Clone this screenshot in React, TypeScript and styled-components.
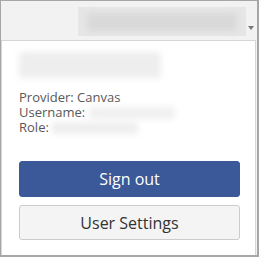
import React from 'react';
import styled, { createGlobalStyle } from 'styled-components';

const GlobalStyle = createGlobalStyle`
  html, body {
    margin: 0;
    padding: 0;
    background: #ffffff;
  }
  body {
    font-family: "Open Sans", "Noto Sans", sans-serif;
  }
`;

const Frame = styled.div`
  box-sizing: border-box;
  width: 259px;
  height: 257px;
  border: 1px solid #a6a6a6;
  border-right-width: 2px;
  border-bottom-width: 2px;
  background: #f2f2f2;
  display: flex;
  flex-direction: column;
`;

const TopBar = styled.div`
  height: 39px;
  display: flex;
  align-items: center;
  justify-content: flex-end;
  padding-right: 3px;
  gap: 2px;
`;

// blurred placeholder for the redacted account details
const Redacted = styled.div<{ w: number; h: number; tone?: string }>`
  width: ${({ w }) => w}px;
  height: ${({ h }) => h}px;
  background: ${({ tone }) => tone || '#ececec'};
  filter: blur(3px);
  border-radius: 2px;
  flex-shrink: 0;
`;

const AccountChip = styled.div`
  width: 168px;
  height: 29px;
  background: #e6e6e6;
  display: flex;
  align-items: center;
  justify-content: center;
  margin-top: 2px;
`;

const Caret = styled.span`
  width: 0;
  height: 0;
  border-left: 3.5px solid transparent;
  border-right: 3.5px solid transparent;
  border-top: 4px solid #777777;
  margin-top: 14px;
`;

const Panel = styled.div`
  flex: 1;
  margin-right: 1px;
  background: #ffffff;
  border: 1px solid #d6d6d6;
  border-bottom: none;
  padding: 11px 16px 0 17px;
  display: flex;
  flex-direction: column;
`;

const Details = styled.div`
  margin-top: 12px;
  font-size: 13px;
  line-height: 15px;
  color: #585858;
`;

const DetailRow = styled.div`
  display: flex;
  align-items: center;
  height: 15px;
  white-space: nowrap;
`;

const Button = styled.button<{ primary?: boolean }>`
  box-sizing: border-box;
  width: 221px;
  height: ${({ primary }) => (primary ? 36 : 35)}px;
  border-radius: 3px;
  font-family: "Open Sans", "Noto Sans", sans-serif;
  font-size: 16px;
  cursor: pointer;
  border: 1px solid ${({ primary }) => (primary ? '#3b5898' : '#cccccc')};
  background: ${({ primary }) => (primary ? '#3b5898' : '#f4f4f4')};
  color: ${({ primary }) => (primary ? '#ffffff' : '#333333')};
  padding: 0;
`;

const Actions = styled.div`
  margin-top: 26px;
  display: flex;
  flex-direction: column;
  gap: 8px;
`;

export default function App() {
  return (
    <>
      <GlobalStyle />
      <Frame>
        <TopBar>
          <AccountChip>
            <Redacted w={150} h={18} tone="#d9d9d9" />
          </AccountChip>
          <Caret />
        </TopBar>
        <Panel>
          <Redacted w={142} h={26} tone="#eeeeee" />
          <Details>
            <DetailRow>Provider: Canvas</DetailRow>
            <DetailRow>
              Username:&nbsp;<Redacted w={86} h={12} tone="#f0f0f0" />
            </DetailRow>
            <DetailRow>
              Role:&nbsp;<Redacted w={86} h={12} tone="#eeeeee" />
            </DetailRow>
          </Details>
          <Actions>
            <Button primary>Sign out</Button>
            <Button>User Settings</Button>
          </Actions>
        </Panel>
      </Frame>
    </>
  );
}
